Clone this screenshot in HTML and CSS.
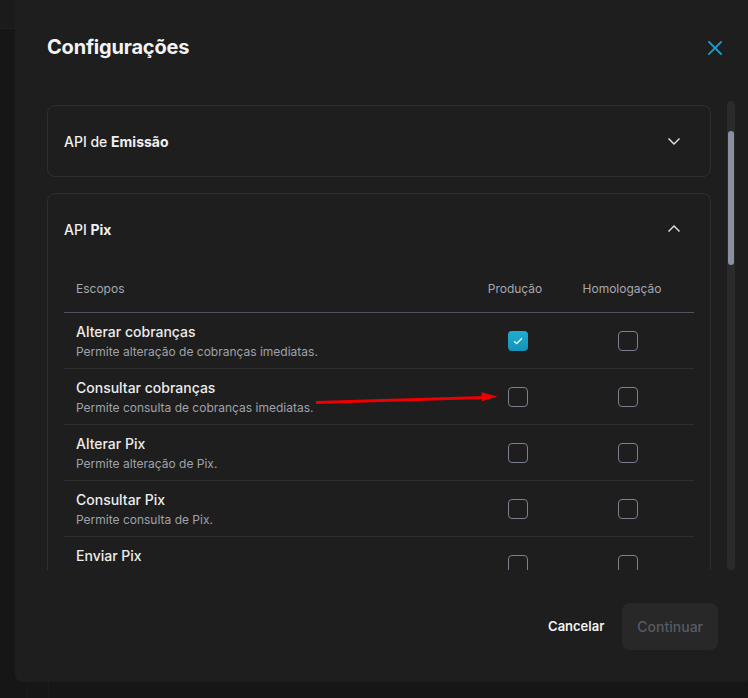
FILE: index.html
```html
<!DOCTYPE html>
<html lang="pt-BR">
<head>
<meta charset="utf-8">
<title>Configurações</title>
<link rel="stylesheet" href="styles.css">
</head>
<body>
<div class="page">
  <div class="page-top"></div>
  <div class="page-body"><div class="page-col"></div></div>
</div>

<div class="modal">
  <header class="modal-head">
    <h1 class="modal-title">Configurações</h1>
    <button class="close" aria-label="Fechar">
      <svg width="14" height="14" viewBox="0 0 14 14"><path d="M1 1L13 13M13 1L1 13" stroke="#1d9dcc" stroke-width="1.8" stroke-linecap="square" fill="none"/></svg>
    </button>
  </header>

  <div class="modal-scroll">
    <div class="scroll-content">
      <section class="card">
        <div class="card-head">
          <span class="card-title">API de <b>Emissão</b></span>
          <svg class="chev" width="14" height="14" viewBox="0 0 14 14"><path d="M1.5 4.5L7 10L12.5 4.5" stroke="#e6e6e6" stroke-width="1.4" fill="none"/></svg>
        </div>
      </section>

      <section class="card">
        <div class="card-head">
          <span class="card-title">API <b>Pix</b></span>
          <svg class="chev" width="14" height="14" viewBox="0 0 14 14"><path d="M1.5 9.5L7 4L12.5 9.5" stroke="#e6e6e6" stroke-width="1.4" fill="none"/></svg>
        </div>
        <div class="scopes">
          <div class="scopes-head">
            <span>Escopos</span>
            <span class="col-c">Produção</span>
            <span class="col-c">Homologação</span>
          </div>

          <div class="scope-row">
            <div class="scope-text"><div class="scope-name">Alterar cobranças</div><div class="scope-desc">Permite alteração de cobranças imediatas.</div></div>
            <div class="cb-cell prod"><span class="cb checked"><svg width="10" height="8" viewBox="0 0 10 8"><path d="M1 4.2L3.7 6.6L9 1.3" stroke="#e8f7fb" stroke-width="1.4" fill="none"/></svg></span></div>
            <div class="cb-cell homo"><span class="cb"></span></div>
          </div>

          <div class="scope-row">
            <div class="scope-text"><div class="scope-name">Consultar cobranças</div><div class="scope-desc">Permite consulta de cobranças imediatas.</div></div>
            <div class="cb-cell prod"><span class="cb"></span></div>
            <div class="cb-cell homo"><span class="cb"></span></div>
          </div>

          <div class="scope-row">
            <div class="scope-text"><div class="scope-name">Alterar Pix</div><div class="scope-desc">Permite alteração de Pix.</div></div>
            <div class="cb-cell prod"><span class="cb"></span></div>
            <div class="cb-cell homo"><span class="cb"></span></div>
          </div>

          <div class="scope-row">
            <div class="scope-text"><div class="scope-name">Consultar Pix</div><div class="scope-desc">Permite consulta de Pix.</div></div>
            <div class="cb-cell prod"><span class="cb"></span></div>
            <div class="cb-cell homo"><span class="cb"></span></div>
          </div>

          <div class="scope-row">
            <div class="scope-text"><div class="scope-name">Enviar Pix</div></div>
            <div class="cb-cell prod"><span class="cb"></span></div>
            <div class="cb-cell homo"><span class="cb"></span></div>
          </div>
        </div>
      </section>
    </div>
    <div class="scrollbar"><div class="thumb"></div></div>
  </div>

  <footer class="modal-foot">
    <button class="btn-text">Cancelar</button>
    <button class="btn-primary" disabled>Continuar</button>
  </footer>
</div>

<svg class="arrow" width="748" height="698" viewBox="0 0 748 698">
  <path d="M316 402.6L484 397.6" stroke="#ee0000" stroke-width="3" fill="none"/>
  <path d="M497.5 396.5L481.5 392.3L482 401.2Z" fill="#ee0000"/>
</svg>
</body>
</html>
```

FILE: styles.css
```css
* { box-sizing: border-box; }
html, body { margin: 0; padding: 0; }
body {
  width: 748px;
  height: 698px;
  overflow: hidden;
  background: #161616;
  font-family: Inter, "Noto Sans", sans-serif;
  position: relative;
}

.page { height: 698px; display: flex; flex-direction: column; }
.page-top { height: 29px; background: #1b1b1b; border-bottom: 1px solid #202020; }
.page-body { flex: 1; padding-left: 27px; display: flex; }
.page-col { width: 22px; border-left: 1px solid #1b1b1b; border-right: 1px solid #1b1b1b; }

.modal {
  position: absolute;
  left: 15px;
  top: -8px;
  width: 735px;
  height: 690px;
  background: #1e1e1e;
  border-radius: 8px;
  display: flex;
  flex-direction: column;
}

.modal-head {
  height: 109px;
  display: flex;
  align-items: center;
  justify-content: space-between;
  padding: 0 28px 0 32px;
}
.modal-title {
  margin: 0;
  font-size: 20px;
  font-weight: 700;
  color: #f3f3f3;
  letter-spacing: -0.2px;
}
.close {
  background: none;
  border: 0;
  padding: 0;
  width: 14px;
  height: 14px;
  display: flex;
  margin-top: 3px;
}

.modal-scroll {
  height: 469px;
  display: flex;
  gap: 16px;
  padding-left: 32px;
}
.scroll-content {
  width: 664px;
  overflow: hidden;
  padding-top: 4px;
  display: flex;
  flex-direction: column;
  gap: 16px;
}
.scrollbar {
  width: 8px;
  height: 469px;
  background: #2b2b2b;
  border-radius: 4px;
  padding: 30px 1px 0;
}
.thumb {
  height: 134px;
  background: #8b90a0;
  border-radius: 3px;
}

.card {
  border: 1px solid #2f2f2f;
  border-radius: 8px;
  padding: 0 16px;
  flex-shrink: 0;
}
.card-head {
  height: 70px;
  display: flex;
  align-items: center;
  justify-content: space-between;
  padding: 0 13px 0 0;
}
.card-title {
  font-size: 14px;
  font-weight: 500;
  color: #f0f0f0;
}
.card-title b { font-weight: 700; }
.chev { display: block; }

.scopes { display: flex; flex-direction: column; }
.scopes-head, .scope-row {
  display: grid;
  grid-template-columns: 1fr 104px 110px;
  padding: 0 17px 0 12px;
  align-items: center;
}
.scopes-head {
  height: 49px;
  padding-top: 1px;
  border-bottom: 1px solid #50545f;
  font-size: 12px;
  color: #a4a8b1;
}
.col-c { text-align: center; }

.scope-row {
  height: 56px;
  border-bottom: 1px solid #2e2e2e;
}
.scope-name {
  font-size: 14px;
  line-height: 20px;
  font-weight: 500;
  color: #ececec;
}
.scope-desc {
  font-size: 12px;
  line-height: 16px;
  margin-top: 2px;
  color: #9ea2ab;
}
.scope-row:last-child .scope-text { padding-bottom: 18px; }
.cb-cell { display: flex; justify-content: center; }
.cb-cell.prod { padding-left: 5px; }
.cb-cell.homo { padding-left: 11px; }
.cb {
  width: 20px;
  height: 20px;
  border: 1.5px solid #7b808d;
  border-radius: 4px;
  display: flex;
  align-items: center;
  justify-content: center;
}
.cb.checked {
  border: 0;
  background: linear-gradient(#1eaed2, #1492b8);
}

.modal-foot {
  flex: 1;
  display: flex;
  align-items: center;
  justify-content: flex-end;
  gap: 18px;
  padding: 0 32px 0 0;
}
.btn-text {
  background: none;
  border: 0;
  padding: 0;
  font-family: inherit;
  font-size: 13px;
  font-weight: 600;
  color: #f4f4f4;
}
.btn-primary {
  height: 47px;
  padding: 0 15px;
  background: #282828;
  border: 0;
  border-radius: 8px;
  font-family: inherit;
  font-size: 14px;
  font-weight: 500;
  color: #575b64;
}

.arrow {
  position: absolute;
  left: 0;
  top: 0;
  pointer-events: none;
}
```
